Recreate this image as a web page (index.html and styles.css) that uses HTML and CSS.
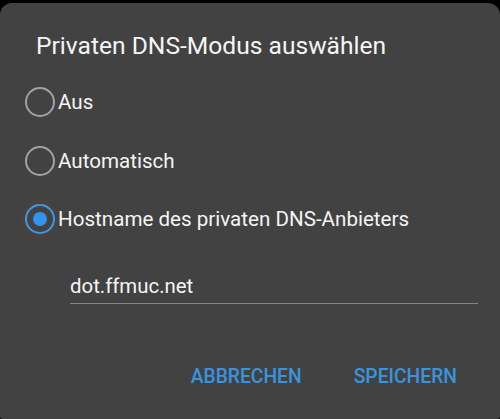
FILE: index.html
```html
<!DOCTYPE html>
<html lang="de">
<head>
<meta charset="utf-8">
<title>Privaten DNS-Modus auswählen</title>
<link rel="stylesheet" href="styles.css">
</head>
<body>
<div class="dialog">
  <h1 class="title">Privaten DNS-Modus auswählen</h1>
  <div class="options">
    <div class="option"><span class="radio"></span><span class="label">Aus</span></div>
    <div class="option"><span class="radio"></span><span class="label">Automatisch</span></div>
    <div class="option"><span class="radio checked"></span><span class="label">Hostname des privaten DNS-Anbieters</span></div>
  </div>
  <div class="field">dot.ffmuc.net</div>
  <div class="actions">
    <span class="btn">ABBRECHEN</span>
    <span class="btn">SPEICHERN</span>
  </div>
</div>
</body>
</html>
```

FILE: styles.css
```css
html, body {
  margin: 0;
  padding: 0;
  background: #000;
  height: 100%;
  overflow: hidden;
}
body {
  font-family: Roboto, "Liberation Sans", sans-serif;
  color: #f5f5f5;
  padding-top: 3px;
  box-sizing: border-box;
}
.dialog {
  background: #424242;
  height: 416px;
  border-radius: 12px 12px 3px 3px;
  padding-top: 29px;
  box-sizing: border-box;
}
.title {
  margin: 0 0 0 36px;
  font-size: 24.6px;
  line-height: 28px;
  font-weight: 400;
}
.options {
  margin-top: 13px;
  padding-left: 25px;
}
.option {
  height: 58.5px;
  display: flex;
  align-items: center;
}
.radio {
  width: 30px;
  height: 30px;
  box-sizing: border-box;
  border: 2.5px solid #a3a3a3;
  border-radius: 50%;
  flex: none;
  position: relative;
}
.radio.checked {
  border-color: #3b9ae6;
  box-shadow: 0 0 0 4px rgba(110, 70, 45, 0.22);
}
.radio.checked::after {
  content: "";
  position: absolute;
  left: 5.5px;
  top: 5.5px;
  width: 14px;
  height: 14px;
  border-radius: 50%;
  background: #2f94f0;
}
.label {
  margin-left: 3px;
  font-size: 20.6px;
  line-height: 24px;
}
.field {
  margin: 25px 22px 0 70px;
  font-size: 20.4px;
  line-height: 24px;
  padding-bottom: 5px;
  border-bottom: 1.5px solid #858585;
}
.actions {
  margin-top: 62px;
  display: flex;
  justify-content: flex-end;
  gap: 52px;
  padding-right: 43px;
}
.btn {
  font-size: 19.3px;
  line-height: 22px;
  font-weight: 500;
  color: #3a93dd;
}
```
